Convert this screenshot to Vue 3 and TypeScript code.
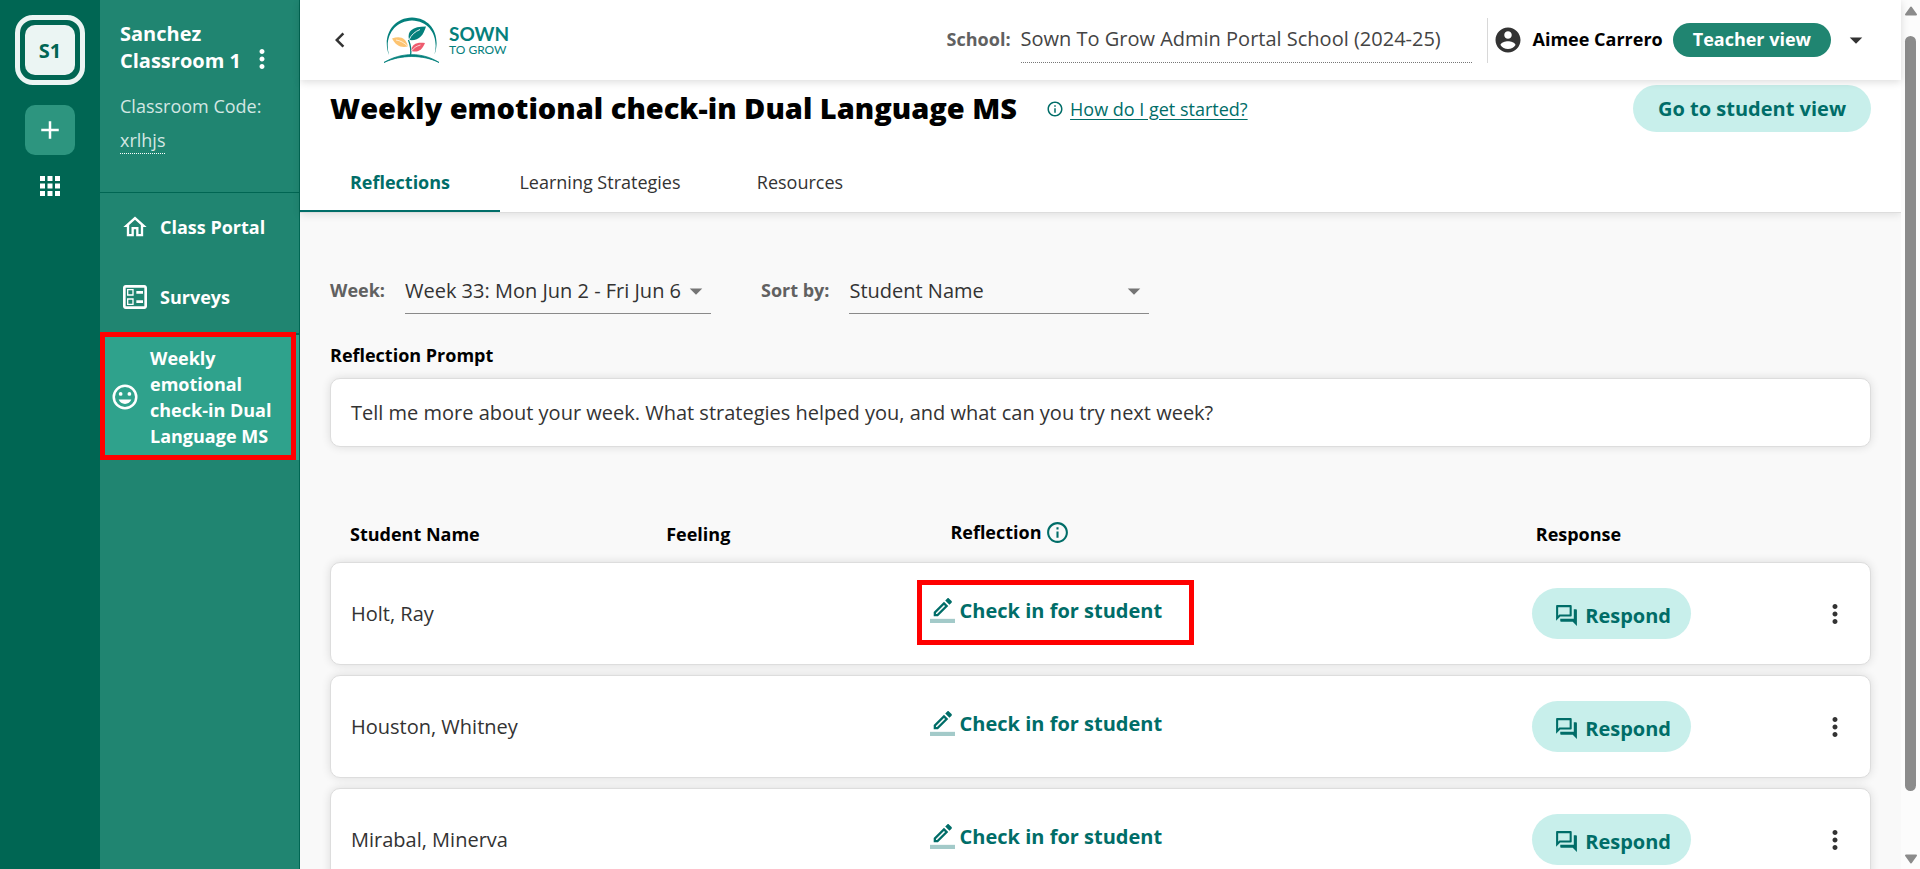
<script setup lang="ts">
import { ref } from 'vue'

interface Student {
  name: string
  highlighted: boolean
}

const tabs: string[] = ['Reflections', 'Learning Strategies', 'Resources']
const activeTab = ref<string>('Reflections')

const students: Student[] = [
  { name: 'Holt, Ray', highlighted: true },
  { name: 'Houston, Whitney', highlighted: false },
  { name: 'Mirabal, Minerva', highlighted: false },
]
</script>

<template>
  <div class="app">
    <nav class="rail" aria-label="Classrooms">
      <button class="classroom" type="button"><span class="classroom-badge">S1</span></button>
      <button class="add" type="button" aria-label="Add classroom">
        <svg class="icon" viewBox="0 0 24 24"><path d="M19 13h-6v6h-2v-6H5v-2h6V5h2v6h6v2z" /></svg>
      </button>
      <button class="apps" type="button" aria-label="All classrooms">
        <svg class="icon" viewBox="0 0 24 24"><path d="M4 8h4V4H4v4zm6 12h4v-4h-4v4zm-6 0h4v-4H4v4zm0-6h4v-4H4v4zm6 0h4v-4h-4v4zm6-10v4h4V4h-4zm-6 4h4V4h-4v4zm6 6h4v-4h-4v4zm0 6h4v-4h-4v4z" /></svg>
      </button>
    </nav>

    <aside class="sidebar">
      <div class="class-info">
        <div class="class-heading">
          <h2 class="class-name">Sanchez Classroom 1</h2>
          <button class="icon-button" type="button" aria-label="Classroom options">
            <svg class="icon" viewBox="0 0 24 24"><path d="M12 8c1.1 0 2-.9 2-2s-.9-2-2-2-2 .9-2 2 .9 2 2 2zm0 2c-1.1 0-2 .9-2 2s.9 2 2 2 2-.9 2-2-.9-2-2-2zm0 6c-1.1 0-2 .9-2 2s.9 2 2 2 2-.9 2-2-.9-2-2-2z" /></svg>
          </button>
        </div>
        <p class="code-label">Classroom Code:</p>
        <p class="code-line"><span class="code">xrlhjs</span></p>
      </div>
      <a class="side-link" href="#portal">
        <span class="side-icon"><svg class="icon-home" viewBox="0 0 24 24"><path d="M12 5.69l5 4.5V18h-2v-6H9v6H7v-7.81l5-4.5M12 3L2 12h3v8h6v-6h2v6h6v-8h3L12 3z" /></svg></span>
        Class Portal
      </a>
      <a class="side-link" href="#surveys">
        <span class="side-icon"><svg class="icon-ballot" viewBox="0 0 24 24"><path d="M13 7.5h5v2h-5zm0 7h5v2h-5zM19 3H5c-1.1 0-2 .9-2 2v14c0 1.1.9 2 2 2h14c1.1 0 2-.9 2-2V5c0-1.1-.9-2-2-2zm0 16H5V5h14v14zM11 6H6v5h5V6zm-1 4H7V7h3v3zm1 3H6v5h5v-5zm-1 4H7v-3h3v3z" /></svg></span>
        Surveys
      </a>
      <a class="side-link active" href="#checkin">
        <svg class="icon" viewBox="0 0 24 24">
          <circle cx="12" cy="12" r="9" fill="none" stroke="currentColor" stroke-width="2" />
          <circle cx="8.5" cy="9.5" r="1.5" /><circle cx="15.5" cy="9.5" r="1.5" />
          <path d="M6.9 14h10.2c-.8 2.1-2.8 3.5-5.1 3.5S7.7 16.1 6.9 14z" />
        </svg>
        <span>Weekly emotional check-in Dual Language MS</span>
        <span class="mark mark-side" aria-hidden="true"></span>
      </a>
    </aside>

    <div class="main">
      <header class="topbar">
        <button class="icon-button back" type="button" aria-label="Back">
          <svg class="icon" viewBox="0 0 24 24"><path d="M15.41 16.59 10.83 12l4.58-4.59L14 6l-6 6 6 6z" /></svg>
        </button>
        <a class="logo" href="#home">
          <svg class="logo-mark" viewBox="0 0 58 50">
            <path d="M6 40C-1 22 9 3 29 2.500c20 .5 29 19 22.500 37C56 22 47 6 29 5.500 11 6 1 22 6 40z" fill="#04807c" />
            <path d="M1 47.500C18 37 40 37 56 47.500 40 39.500 18 39.500 1 47.500z" fill="#04807c" stroke="#04807c" stroke-width=".8" />
            <path d="M27.500 41c1-6 0-11-2-16" fill="none" stroke="#04807c" stroke-width="1.300" />
            <path d="M26 25c-2-9 3-13.500 17-13.500C40 21 36 26 26 25z" fill="#04807c" />
            <path d="M26 25c2-5 6-8.500 11-10.500" fill="none" stroke="#fff" stroke-width=".9" />
            <path d="M9 23.500c8-3 14-1 16 8-8 1.500-12-1-16-8z" fill="#fdc471" />
            <path d="M13 25c4 .5 8 2.500 12 6.500" fill="none" stroke="#fff" stroke-width=".7" />
            <path d="M28.500 36c0-7 5-9 13.500-8-3 7-7 10-13.500 8z" fill="#ee5b6e" />
            <path d="M28.500 36c2-3 5-5 9-6" fill="none" stroke="#fff" stroke-width=".7" />
          </svg>
          <span class="logo-text"><span class="logo-top">SOWN</span><span class="logo-bottom">TO GROW</span></span>
        </a>
        <div class="account">
          <label class="muted-label" for="school">School:</label>
          <select id="school" class="school-select">
            <option>Sown To Grow Admin Portal School (2024-25)</option>
          </select>
          <div class="user">
            <svg class="icon" viewBox="0 0 24 24"><path d="M12 2C6.480 2 2 6.480 2 12s4.480 10 10 10 10-4.480 10-10S17.520 2 12 2zm0 3c1.660 0 3 1.340 3 3s-1.340 3-3 3-3-1.340-3-3 1.340-3 3-3zm0 14.200c-2.500 0-4.710-1.280-6-3.220.03-1.990 4-3.080 6-3.080 1.990 0 5.970 1.090 6 3.080-1.290 1.940-3.500 3.220-6 3.220z" /></svg>
            <span class="user-name">Aimee Carrero</span>
            <button class="view-pill" type="button">Teacher view</button>
            <button class="icon-button caret" type="button" aria-label="Account menu">
              <svg class="icon" viewBox="0 0 24 24"><path d="M7 10l5 5 5-5z" /></svg>
            </button>
          </div>
        </div>
      </header>

      <section class="page-head">
        <div class="title-row">
          <h1 class="title">Weekly emotional check-in Dual Language MS</h1>
          <svg class="info-small" viewBox="0 0 24 24"><path d="M11 7h2v2h-2zm0 4h2v6h-2zm1-9C6.480 2 2 6.480 2 12s4.480 10 10 10 10-4.480 10-10S17.520 2 12 2zm0 18c-4.410 0-8-3.590-8-8s3.590-8 8-8 8 3.590 8 8-3.590 8-8 8z" /></svg>
          <a class="help" href="#help">How do I get started?</a>
          <button class="student-view" type="button">Go to student view</button>
        </div>
        <div class="tabs" role="tablist">
          <button
            v-for="tab in tabs"
            :key="tab"
            type="button"
            role="tab"
            class="tab"
            :class="{ selected: tab === activeTab }"
            :aria-selected="tab === activeTab"
            @click="activeTab = tab"
          >{{ tab }}</button>
        </div>
      </section>

      <main class="content">
        <div class="filters">
          <label class="muted-label" for="week">Week:</label>
          <span class="select-wrap week">
            <select id="week" class="select"><option>Week 33: Mon Jun 2 - Fri Jun 6</option></select>
            <svg class="icon select-arrow" viewBox="0 0 24 24"><path d="M7 10l5 5 5-5z" /></svg>
          </span>
          <label class="muted-label" for="sort">Sort by:</label>
          <span class="select-wrap sort">
            <select id="sort" class="select"><option>Student Name</option></select>
            <svg class="icon select-arrow" viewBox="0 0 24 24"><path d="M7 10l5 5 5-5z" /></svg>
          </span>
        </div>

        <h2 class="prompt-label">Reflection Prompt</h2>
        <p class="card prompt">Tell me more about your week. What strategies helped you, and what can you try next week?</p>

        <table class="students">
          <thead>
            <tr class="row head-row">
              <th scope="col" class="cell-name">Student Name</th>
              <th scope="col">Feeling</th>
              <th scope="col" class="head-reflection">
                Reflection
                <svg class="info" viewBox="0 0 24 24"><path d="M11 7h2v2h-2zm0 4h2v6h-2zm1-9C6.480 2 2 6.480 2 12s4.480 10 10 10 10-4.480 10-10S17.520 2 12 2zm0 18c-4.410 0-8-3.590-8-8s3.590-8 8-8 8 3.590 8 8-3.590 8-8 8z" /></svg>
              </th>
              <th scope="col" class="head-response">Response</th>
              <td></td>
            </tr>
          </thead>
          <tbody>
            <tr v-for="student in students" :key="student.name" class="row card student-row">
              <td class="cell-name">{{ student.name }}</td>
              <td></td>
              <td>
                <button class="checkin" type="button">
                  <svg class="pencil" viewBox="0 0 24 24">
                    <path transform="translate(-.8 -2.100) scale(1.090)" d="M16.810 8.940l-3.750-3.750L4 14.250V18h3.750l9.060-9.060zM6 16v-.92l7.060-7.060.92.92L6.920 16H6zm13.710-9.960c.39-.39.39-1.020 0-1.410l-2.340-2.340c-.2-.2-.45-.29-.71-.29-.25 0-.51.1-.7.29l-1.830 1.830 3.750 3.750 1.830-1.830z" />
                    <path opacity=".36" d="M0 20h24v4H0z" />
                  </svg>
                  Check in for student
                  <span v-if="student.highlighted" class="mark mark-row" aria-hidden="true"></span>
                </button>
              </td>
              <td>
                <button class="respond" type="button">
                  <svg class="chat" viewBox="0 0 24 24"><path d="M15 4v7H5.170l-.59.59-.58.58V4h11m1-2H3c-.55 0-1 .45-1 1v14l4-4h10c.55 0 1-.45 1-1V3c0-.55-.45-1-1-1zm5 4h-2v9H6v2c0 .55.45 1 1 1h11l4 4V7c0-.55-.45-1-1-1z" /></svg>
                  Respond
                </button>
              </td>
              <td class="cell-menu">
                <button class="icon-button" type="button" :aria-label="`Options for ${student.name}`">
                  <svg class="icon" viewBox="0 0 24 24"><path d="M12 8c1.100 0 2-.9 2-2s-.9-2-2-2-2 .9-2 2 .9 2 2 2zm0 2c-1.100 0-2 .9-2 2s.9 2 2 2 2-.9 2-2-.9-2-2-2zm0 6c-1.100 0-2 .9-2 2s.9 2 2 2 2-.9 2-2-.9-2-2-2z" /></svg>
                </button>
              </td>
            </tr>
          </tbody>
        </table>
      </main>
    </div>

    <div class="scrollbar" aria-hidden="true">
      <svg class="scroll-arrow" viewBox="0 0 14 10"><path d="M7 1.500 12 8.500H2z" /></svg>
      <span class="thumb"></span>
      <svg class="scroll-arrow" viewBox="0 0 14 10"><path d="M7 8.500 2 1.500h10z" /></svg>
    </div>
  </div>
</template>

<style>
body {
  margin: 0;
}
</style>

<style scoped>
.app {
  display: flex;
  height: 100vh;
  overflow: hidden;
  font-family: 'Open Sans', 'Noto Sans', sans-serif;
  font-size: 20px;
  color: #333;
  background: #f9f9f9;
}
.app *,
.app *::before {
  box-sizing: border-box;
}
button,
select {
  font: inherit;
  color: inherit;
  border: 0;
  padding: 0;
  margin: 0;
  background: none;
  cursor: pointer;
}
h1,
h2,
p {
  margin: 0;
}
svg {
  display: block;
  flex: none;
  fill: currentColor;
}
.icon {
  width: 30px;
  height: 30px;
}

/* Classroom rail */
.rail {
  display: flex;
  flex: none;
  flex-direction: column;
  align-items: center;
  gap: 20px;
  width: 100px;
  padding-top: 15px;
  color: #fff;
  background: #006653;
}
.classroom {
  width: 70px;
  height: 70px;
  padding: 5px;
  border: 5px solid #ebf5f3;
  border-radius: 18px;
}
.classroom-badge {
  display: flex;
  align-items: center;
  justify-content: center;
  height: 50px;
  border-radius: 10px;
  font-weight: 700;
  color: #006653;
  background: #ebf5f3;
}
.add {
  display: flex;
  align-items: center;
  justify-content: center;
  width: 50px;
  height: 50px;
  border-radius: 10px;
  background: #2d957f;
}
.apps {
  margin-top: -4px;
}

/* Sidebar */
.sidebar {
  flex: none;
  width: 200px;
  border-right: 1px solid #006653;
  color: #fff;
  background: #208571;
}
.class-info {
  height: 193px;
  padding: 20px 20px 0;
  border-bottom: 1px solid #006653;
}
.class-heading {
  display: flex;
  align-items: flex-end;
  justify-content: space-between;
}
.class-name {
  width: 122px;
  font-size: 20px;
  font-weight: 700;
  line-height: 27px;
}
.class-heading .icon-button {
  margin-right: 2px;
}
.icon-button {
  display: flex;
  align-items: center;
  justify-content: center;
}
.code-label,
.code-line {
  font-size: 18px;
  line-height: 34px;
  color: #d3e7e3;
}
.code-label {
  margin-top: 15px;
  white-space: nowrap;
}
.code {
  display: inline-block;
  line-height: 25px;
  border-bottom: 1px dotted #fff;
}
.side-link {
  position: relative;
  display: flex;
  align-items: center;
  gap: 10px;
  min-height: 70px;
  padding: 0 20px 2px;
  font-size: 18px;
  font-weight: 700;
  color: #fff;
  text-decoration: none;
}
.side-icon {
  display: flex;
  align-items: center;
  justify-content: center;
  width: 30px;
}
.icon-home {
  width: 28px;
  height: 28px;
}
.icon-ballot {
  flex: none;
  width: 32px;
  height: 32px;
}
.side-link.active {
  min-height: 127px;
  padding: 0 10px 2px;
  border-top: 2px solid #006653;
  line-height: 26px;
  background: #2fa28c;
}
.mark {
  position: absolute;
  border: 5px solid #f00;
  pointer-events: none;
}
.mark-side {
  inset: -3px 3px 0 0;
}

/* Top bar */
.main {
  display: flex;
  flex: 1;
  flex-direction: column;
  min-width: 0;
}
.topbar {
  position: relative;
  z-index: 1;
  display: flex;
  flex: none;
  align-items: center;
  height: 80px;
  padding: 0 30px 0 25px;
  background: #fff;
  box-shadow: 0 2px 8px rgba(0, 0, 0, 0.14);
}
.logo {
  display: flex;
  align-items: center;
  gap: 8px;
  margin-left: 28px;
  font-family: Lato, sans-serif;
  color: #04807c;
  text-decoration: none;
}
.logo-mark {
  width: 58px;
  height: 50px;
}
.logo-text {
  display: flex;
  flex-direction: column;
}
.logo-top {
  font-size: 19px;
  font-weight: 700;
  line-height: 19px;
}
.logo-bottom {
  font-size: 12px;
  line-height: 14px;
}
.account {
  display: flex;
  align-items: center;
  margin-left: auto;
}
.muted-label {
  padding-bottom: 2px;
  font-size: 18px;
  font-weight: 700;
  color: #616161;
}
.school-select {
  appearance: none;
  width: 451px;
  height: 46px;
  margin: 0 15px 0 10px;
  padding-bottom: 2px;
  border-bottom: 1px dotted #777;
  color: #444;
}
.user {
  display: flex;
  align-items: center;
  height: 45px;
  padding-left: 5px;
  border-left: 1px solid #d8d8d8;
}
.user-name {
  margin: 0 10px;
  padding-bottom: 2px;
  font-size: 18px;
  font-weight: 700;
  color: #000;
  white-space: nowrap;
}
.view-pill {
  height: 34px;
  padding: 0 20px 2px;
  border-radius: 17px;
  font-size: 18px;
  font-weight: 700;
  line-height: 32px;
  color: #fff;
  white-space: nowrap;
  background: #208571;
}
.caret {
  margin-left: 10px;
}

/* Page heading */
.page-head {
  flex: none;
  border-bottom: 1px solid #ddd;
  background: #fff;
  box-shadow: 0 2px 8px rgba(0, 0, 0, 0.1);
}
.title-row {
  display: flex;
  align-items: center;
  height: 72px;
  padding: 0 30px 15px;
}
.title {
  padding-bottom: 2px;
  font-size: 29px;
  font-weight: 800;
  line-height: 40px;
  color: #000;
  white-space: nowrap;
}
.info-small {
  width: 18px;
  height: 18px;
  margin-left: 29px;
  color: #006d68;
}
.help {
  margin-left: 6px;
  font-size: 18px;
  color: #006d68;
  text-underline-offset: 3px;
}
.student-view {
  height: 47px;
  margin-left: auto;
  padding: 0 25px;
  border-radius: 24px;
  font-weight: 700;
  color: #006d68;
  white-space: nowrap;
  background: #c8efeb;
}
.tabs {
  display: flex;
}
.tab {
  width: 200px;
  height: 60px;
  padding-top: 2px;
  border-bottom: 2px solid transparent;
  font-size: 18px;
}
.tab.selected {
  border-color: #006d68;
  font-weight: 700;
  color: #006d68;
}

/* Content */
.content {
  flex: 1;
  min-height: 0;
  padding: 55px 30px 0;
}
.filters {
  display: flex;
  align-items: center;
}
.select-wrap {
  position: relative;
  border-bottom: 1px solid #8a8a8a;
}
.week {
  width: 306px;
  margin: 0 50px 0 20px;
}
.sort {
  width: 300px;
  margin-left: 20px;
}
.select {
  appearance: none;
  width: 100%;
  height: 45px;
}
.select-arrow {
  position: absolute;
  top: 8px;
  right: 0;
  color: #757575;
  pointer-events: none;
}
.prompt-label {
  margin-top: 27px;
  font-size: 18px;
  font-weight: 700;
  line-height: 28px;
  color: #000;
}
.card {
  border: 1px solid #ddd;
  border-radius: 10px;
  background: #fff;
  box-shadow: 0 0 10px rgba(0, 0, 0, 0.12);
}
.prompt {
  margin-top: 9px;
  padding: 20px;
  line-height: 27px;
}
.students {
  display: block;
  margin-top: 67px;
}
.students thead,
.students tbody {
  display: block;
}
.row {
  display: grid;
  grid-template-columns: 336fr 263fr 603fr 278fr 60fr;
  align-items: center;
}
.row th,
.row td {
  padding: 0;
  text-align: left;
}
.head-row {
  height: 48px;
  padding-bottom: 9px;
  font-size: 18px;
  color: #000;
}
.row .cell-name {
  padding-left: 20px;
}
.row .head-reflection {
  display: flex;
  align-items: center;
  gap: 3px;
  padding: 0 0 3px 21px;
}
.row .head-response {
  padding-left: 3px;
}
.info {
  width: 25px;
  height: 25px;
  color: #006d68;
}
.student-row {
  height: 103px;
  margin-bottom: 10px;
}
.checkin {
  position: relative;
  display: flex;
  align-items: center;
  gap: 5px;
  margin-bottom: 7px;
  font-weight: 700;
  color: #006d68;
}
.pencil {
  width: 25px;
  height: 25px;
}
.mark-row {
  top: -17px;
  left: -13px;
  width: 277px;
  height: 65px;
}
.respond {
  display: flex;
  align-items: center;
  gap: 6px;
  height: 51px;
  padding: 4px 20px 0 22px;
  border-radius: 26px;
  font-weight: 700;
  color: #006d68;
  background: #c8efeb;
}
.chat {
  width: 25px;
  height: 25px;
}
.cell-menu .icon-button {
  margin-left: 10px;
}

/* Scroll track */
.scrollbar {
  display: flex;
  flex: none;
  flex-direction: column;
  align-items: center;
  width: 19px;
  padding: 6px 0 5px;
  color: #8b8b8b;
  background: #fcfcfc;
}
.scroll-arrow {
  width: 14px;
  height: 10px;
  stroke: currentColor;
  stroke-width: 2;
  stroke-linejoin: round;
}
.thumb {
  width: 11px;
  height: 88%;
  margin: 20px 0 auto;
  border-radius: 6px;
  background: #8b8b8b;
}
</style>
